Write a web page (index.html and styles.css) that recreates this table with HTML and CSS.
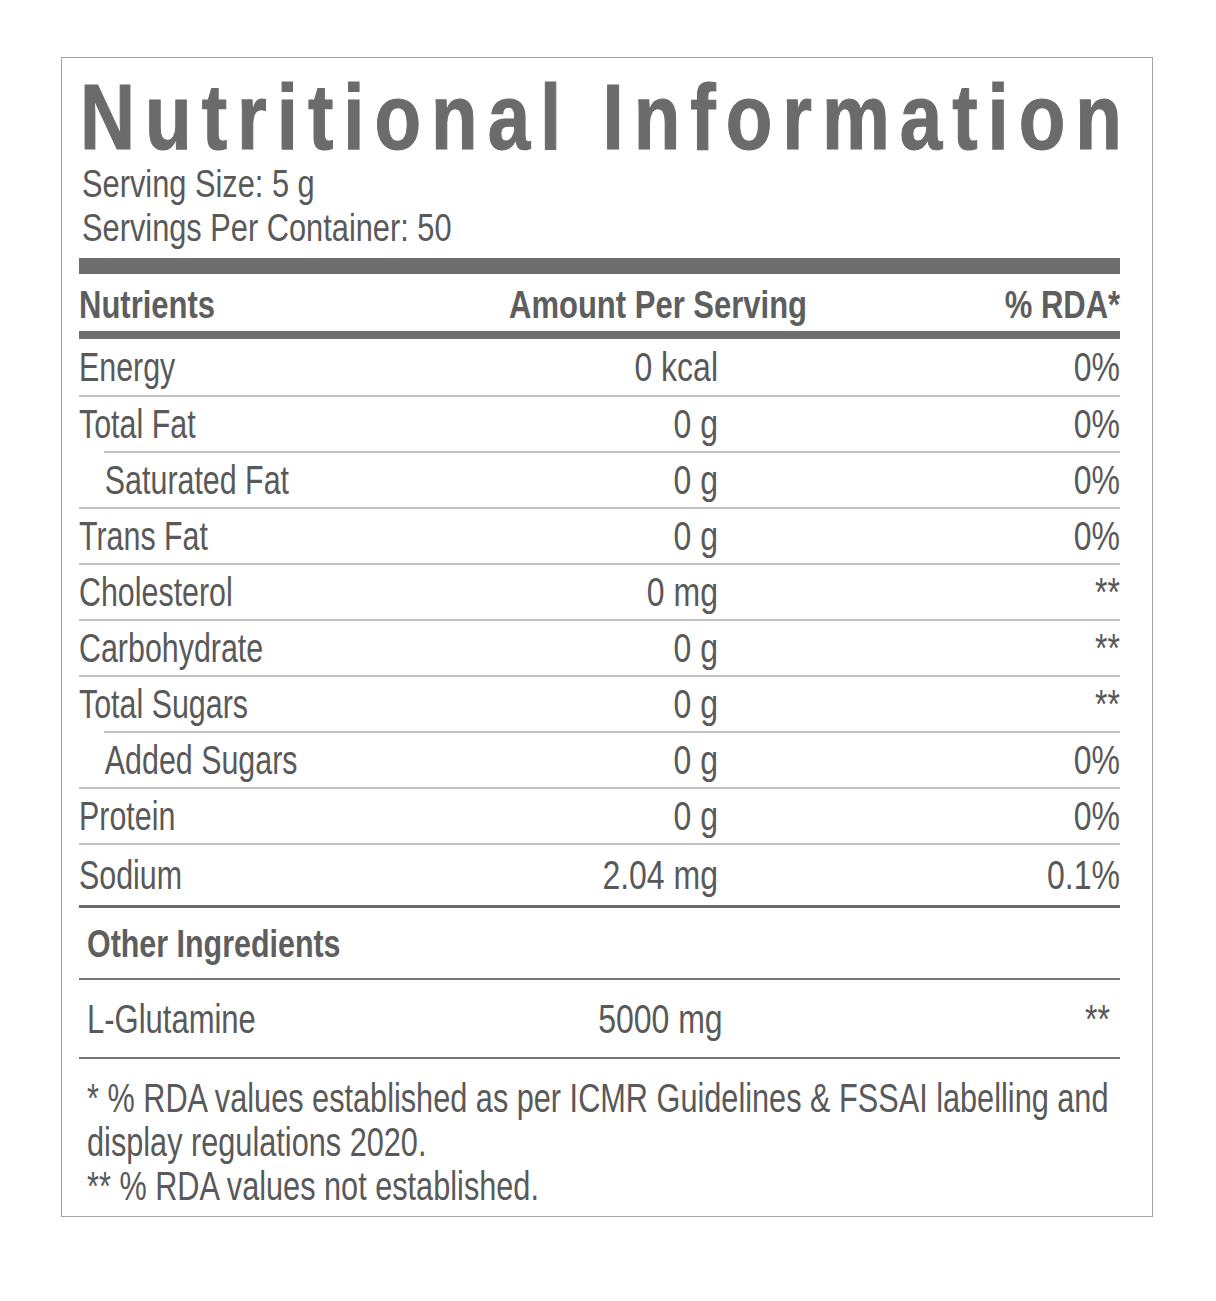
FILE: index.html
```html
<!DOCTYPE html>
<html lang="en">
<head>
<meta charset="utf-8">
<title>Nutritional Information</title>
<link rel="stylesheet" href="styles.css">
</head>
<body>
<div class="label">
  <h1 class="title">Nutritional Information</h1>
  <div class="serving">
    <div>Serving Size: 5 g</div>
    <div>Servings Per Container: 50</div>
  </div>
  <div class="bar thick"></div>
  <div class="head">
    <span class="l">Nutrients</span>
    <span class="l">Amount Per Serving</span>
    <span class="r">% RDA*</span>
  </div>
  <div class="bar mid"></div>
  <div class="rows">
    <div class="row"><span class="l">Energy</span><span class="r">0 kcal</span><span class="r">0%</span></div>
    <div class="row"><span class="l">Total Fat</span><span class="r">0 g</span><span class="r">0%</span></div>
    <div class="row sub"><span class="l ind">Saturated Fat</span><span class="r">0 g</span><span class="r">0%</span></div>
    <div class="row"><span class="l">Trans Fat</span><span class="r">0 g</span><span class="r">0%</span></div>
    <div class="row"><span class="l">Cholesterol</span><span class="r">0 mg</span><span class="r">**</span></div>
    <div class="row"><span class="l">Carbohydrate</span><span class="r">0 g</span><span class="r">**</span></div>
    <div class="row"><span class="l">Total Sugars</span><span class="r">0 g</span><span class="r">**</span></div>
    <div class="row sub"><span class="l ind">Added Sugars</span><span class="r">0 g</span><span class="r">0%</span></div>
    <div class="row"><span class="l">Protein</span><span class="r">0 g</span><span class="r">0%</span></div>
    <div class="row last"><span class="l">Sodium</span><span class="r">2.04 mg</span><span class="r">0.1%</span></div>
  </div>
  <div class="other-head"><span>Other Ingredients</span></div>
  <div class="other-row"><span class="l">L-Glutamine</span><span class="r">5000 mg</span><span class="r">**</span></div>
  <div class="notes">
    <p>* % RDA values established as per ICMR Guidelines &amp; FSSAI labelling and display regulations 2020.</p>
    <p>** % RDA values not established.</p>
  </div>
</div>
</body>
</html>
```
FILE: styles.css
```css
html, body {
  margin: 0;
  padding: 0;
  background: #ffffff;
}

body {
  font-family: "Liberation Sans", Arial, sans-serif;
  color: #595959;
}

.label {
  box-sizing: border-box;
  width: 1092px;
  height: 1160px;
  margin: 57px 0 0 61px;
  border: 1px solid #a3a3a3;
  padding: 14px 32px 0 17px;
  overflow: hidden;
}

.title {
  margin: 0 0 0 1px;
  font-size: 93px;
  line-height: 90px;
  font-weight: 700;
  letter-spacing: 12.2px;
  color: #6b6b6b;
  -webkit-text-stroke: 1.2px #6b6b6b;
  white-space: nowrap;
  transform: scaleX(0.82);
  transform-origin: left center;
}

.serving {
  padding-left: 3px;
  font-size: 38px;
  line-height: 44px;
}

.serving div {
  transform: scaleX(0.81);
  transform-origin: left center;
  white-space: nowrap;
}

.bar {
  background: #6e6e6e;
}

.bar.thick {
  height: 16px;
  margin-top: 8px;
}

.bar.mid {
  height: 8px;
}

.head {
  display: grid;
  grid-template-columns: 430px 1fr auto;
  height: 57px;
  box-sizing: border-box;
  padding-top: 9px;
  font-size: 39px;
  line-height: 44px;
  font-weight: 700;
  color: #5e5e5e;
  white-space: nowrap;
}

.head span {
  transform: scaleX(0.795);
}

.l {
  text-align: left;
  transform-origin: left center;
}

.r {
  text-align: right;
  transform-origin: right center;
}

.row {
  display: grid;
  grid-template-columns: 1fr 200px 402px;
  align-items: center;
  height: 56px;
  box-sizing: border-box;
  border-top: 2px solid #c4c4c4;
  font-size: 40px;
  line-height: 44px;
  white-space: nowrap;
}

.row:first-child {
  border-top: none;
}

.row .l {
  transform: scaleX(0.76);
}

.row .r {
  transform: scaleX(0.8);
}

.row.sub {
  border-top: none;
  padding-top: 2px;
  background: linear-gradient(#c4c4c4, #c4c4c4) 25px 0 / calc(100% - 25px) 2px no-repeat;
}

.ind {
  padding-left: 34px;
}

.row.last {
  height: 65px;
  padding-bottom: 1px;
  border-bottom: 3px solid #6a6a6a;
}

.other-head {
  height: 72px;
  box-sizing: border-box;
  padding: 14px 0 0 8px;
  font-size: 39px;
  line-height: 44px;
  font-weight: 700;
  color: #5e5e5e;
  border-bottom: 2px solid #767676;
  white-space: nowrap;
}

.other-head span {
  display: inline-block;
  transform: scaleX(0.78);
  transform-origin: left center;
}

.other-row {
  display: grid;
  grid-template-columns: 1fr auto 387px;
  align-items: center;
  height: 79px;
  box-sizing: border-box;
  padding: 0 10px 0 8px;
  font-size: 40px;
  line-height: 44px;
  border-bottom: 2px solid #767676;
  white-space: nowrap;
}

.other-row .l {
  transform: scaleX(0.775);
}

.other-row .r {
  transform: scaleX(0.8);
}

.notes {
  padding: 17px 0 0 8px;
  font-size: 40px;
  line-height: 44px;
  overflow: hidden;
}

.notes p {
  margin: 0;
  width: 130.4%;
  transform: scaleX(0.767);
  transform-origin: left top;
}
```
